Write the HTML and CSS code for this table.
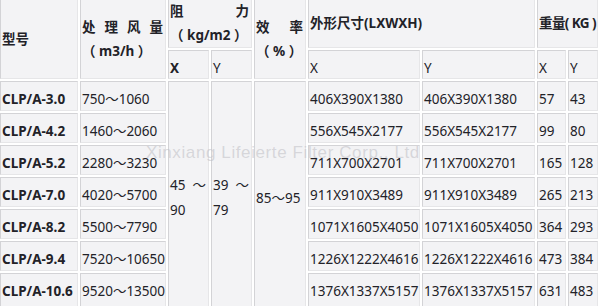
FILE: index.html
```html
<!DOCTYPE html>
<html lang="zh">
<head>
<meta charset="utf-8">
<link rel="stylesheet" href="styles.css">
</head>
<body>
<div class="wrap">
<table class="spec">
  <colgroup>
    <col class="c1"><col class="c2"><col class="c3"><col class="c4"><col class="c5"><col class="c6"><col class="c7"><col class="c8"><col class="c9">
  </colgroup>
  <thead>
    <tr class="hr1">
      <th rowspan="2" class="mid">型号</th>
      <th rowspan="2" class="mid two"><span class="spread"><span>处</span><span>理</span><span>风</span><span>量</span></span><span class="line">（ m3/h ）</span></th>
      <th colspan="2" class="top two"><span class="spread"><span>阻</span><span>力</span></span><span class="line">（ kg/m2 ）</span></th>
      <th rowspan="2" class="mid two"><span class="spread"><span>效</span><span>率</span></span><span class="line">（ % ）</span></th>
      <th colspan="2" class="mid">外形尺寸(LXWXH)</th>
      <th colspan="2" class="mid weight">重量( KG )</th>
    </tr>
    <tr class="hr2">
      <th>X</th><th class="n">Y</th><th class="n">X</th><th class="n">Y</th><th class="n">X</th><th class="n">Y</th>
    </tr>
  </thead>
  <tbody>
    <tr>
      <td class="model">CLP/A-3.0</td><td>750～1060</td>
      <td rowspan="7" class="span"><span class="spread"><span>45</span><span>～</span></span><span class="line">90</span></td>
      <td rowspan="7" class="span"><span class="spread"><span>39</span><span>～</span></span><span class="line">79</span></td>
      <td rowspan="7" class="span">85～95</td>
      <td>406X390X1380</td><td>406X390X1380</td><td>57</td><td>43</td>
    </tr>
    <tr><td class="model">CLP/A-4.2</td><td>1460～2060</td><td>556X545X2177</td><td>556X545X2177</td><td>99</td><td>80</td></tr>
    <tr><td class="model">CLP/A-5.2</td><td>2280～3230</td><td>711X700X2701</td><td>711X700X2701</td><td>165</td><td>128</td></tr>
    <tr><td class="model">CLP/A-7.0</td><td>4020～5700</td><td>911X910X3489</td><td>911X910X3489</td><td>265</td><td>213</td></tr>
    <tr><td class="model">CLP/A-8.2</td><td>5500～7790</td><td>1071X1605X4050</td><td>1071X1605X4050</td><td>364</td><td>293</td></tr>
    <tr><td class="model">CLP/A-9.4</td><td>7520～10650</td><td>1226X1222X4616</td><td>1226X1222X4616</td><td>473</td><td>384</td></tr>
    <tr class="last"><td class="model">CLP/A-10.6</td><td>9520～13500</td><td>1376X1337X5157</td><td>1376X1337X5157</td><td>631</td><td>483</td></tr>
  </tbody>
</table>
<div class="watermark">Xinxiang Lifeierte Filter Corp., Ltd</div>
</div>
</body>
</html>
```

FILE: styles.css
```css
html, body {
  margin: 0;
  padding: 0;
  background: #ffffff;
  overflow: hidden;
}
.wrap {
  position: relative;
  width: 600px;
  height: 306px;
  overflow: hidden;
}
.spec {
  table-layout: fixed;
  border-collapse: separate;
  border-spacing: 2px;
  margin: -4px 0 0 -2px;
  width: 602px;
  font-family: "Noto Sans", "Noto Sans CJK SC", sans-serif;
  font-size: 13.5px;
  color: #222228;
}
.c1 { width: 78px; }
.c2 { width: 86px; }
.c3 { width: 41px; }
.c4 { width: 41px; }
.c5 { width: 52px; }
.c6 { width: 112px; }
.c7 { width: 113px; }
.c8 { width: 29px; }
.c9 { width: 30px; }
.spec th, .spec td {
  background: #f3f3f5;
  border: 1px solid;
  border-color: #d3d3d6 #e6e6e8 #e6e6e8 #d3d3d6;
  padding: 0 2px 0 1px;
  text-align: left;
  vertical-align: middle;
  overflow: hidden;
  white-space: nowrap;
}
.spec th {
  font-weight: 700;
  line-height: 24px;
}
.spec th.n { font-weight: 400; }
.spec th.top { vertical-align: top; }
.spec th.weight { letter-spacing: -0.6px; }
.hr2 { height: 29px; }
.hr2 th {
  vertical-align: top;
  line-height: 20px;
  padding-top: 7px;
}
.spec tbody tr { height: 30px; }
.spec tbody tr.last { height: 36px; }
.spec td {
  line-height: 20px;
  vertical-align: top;
  padding-top: 7px;
}
.model { font-weight: 700; }
.spread {
  display: flex;
  justify-content: space-between;
}
.line { display: block; }
.spec td.span {
  line-height: 25px;
  vertical-align: middle;
  padding-top: 6px;
}
.watermark {
  position: absolute;
  left: 146px;
  top: 143px;
  font-family: "Liberation Sans", Arial, sans-serif;
  font-size: 17px;
  line-height: 20px;
  letter-spacing: 0.6px;
  color: rgba(190, 190, 196, 0.55);
  white-space: nowrap;
  pointer-events: none;
}
```
